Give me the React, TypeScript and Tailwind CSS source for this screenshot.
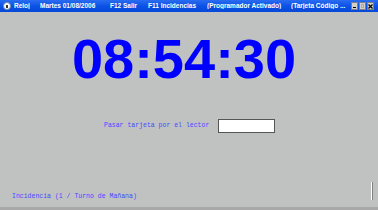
import React from 'react';

const TitleBar: React.FC = () => {
  return (
    <div className="flex items-center h-[12px] bg-gradient-to-b from-[#2a6cf0] via-[#0a52e6] to-[#0848d6] text-white font-bold text-[6.5px] leading-none font-['Liberation_Sans',sans-serif] whitespace-nowrap">
      <div className="shrink-0 w-[14px] pl-[3px]">
        <div className="w-[8px] h-[8px] rounded-full bg-white border border-[#7a8ab0] flex items-center justify-center">
          <div className="w-[2px] h-[3px] bg-[#333]" />
        </div>
      </div>
      <span className="shrink-0 w-[26px] overflow-hidden">Reloj</span>
      <span className="shrink-0 w-[70px] overflow-hidden">Martes 01/08/2006</span>
      <span className="shrink-0 w-[38px] overflow-hidden">F12 Salir</span>
      <span className="shrink-0 w-[59px] overflow-hidden">F11 Incidencias</span>
      <span className="shrink-0 w-[84px] overflow-hidden">(Programador Activado)</span>
      <span className="shrink-0 w-[60px] overflow-hidden">(Tarjeta Código ...</span>
      <div className="shrink-0 flex gap-[1px]">
        <div className="w-[7px] h-[8px] bg-[#d4d0c8] border border-[#808080] flex items-end justify-center pb-[1px]">
          <div className="w-[3px] h-[1px] bg-black" />
        </div>
        <div className="w-[7px] h-[8px] bg-[#d4d0c8] border border-[#808080] flex items-center justify-center">
          <div className="w-[3px] h-[4px] border border-[#aaa]" />
        </div>
        <div className="w-[7px] h-[8px] bg-[#d4d0c8] border border-[#808080] flex items-center justify-center">
          <svg width="5" height="5" viewBox="0 0 5 5">
            <path d="M0.5 0.5L4.5 4.5M4.5 0.5L0.5 4.5" stroke="#000" strokeWidth="1.3" />
          </svg>
        </div>
      </div>
    </div>
  );
};

export default function App() {
  return (
    <div className="w-[378px] h-[210px] bg-[#c0c2c2] flex flex-col border-b-[3px] border-[#a8a8a8] overflow-hidden">
      <TitleBar />
      <div className="flex-1 flex flex-col relative">
        <div className="mt-[23px] pr-[10px] text-center text-[#0000ff] font-bold text-[56px] leading-[48px] font-['Liberation_Sans',sans-serif]">
          08:54:30
        </div>
        <div className="mt-[36px] flex items-center pl-[104px]">
          <span className="text-[#4848ff] text-[6.5px] font-['Liberation_Mono',monospace] leading-none">
            Pasar tarjeta por el lector
          </span>
          <div className="ml-[9px] w-[57px] h-[14px] bg-white border border-[#555]" />
        </div>
        <div className="mt-auto mb-[7px] pl-[12px] flex items-end">
          <span className="text-[#4848ff] text-[6.5px] font-['Liberation_Mono',monospace] leading-none">
            Incidencia (1 / Turno de Mañana)
          </span>
          <div className="ml-auto mr-[5px] w-[2px] h-[18px] bg-white border-r border-[#808080]" />
        </div>
      </div>
    </div>
  );
}
